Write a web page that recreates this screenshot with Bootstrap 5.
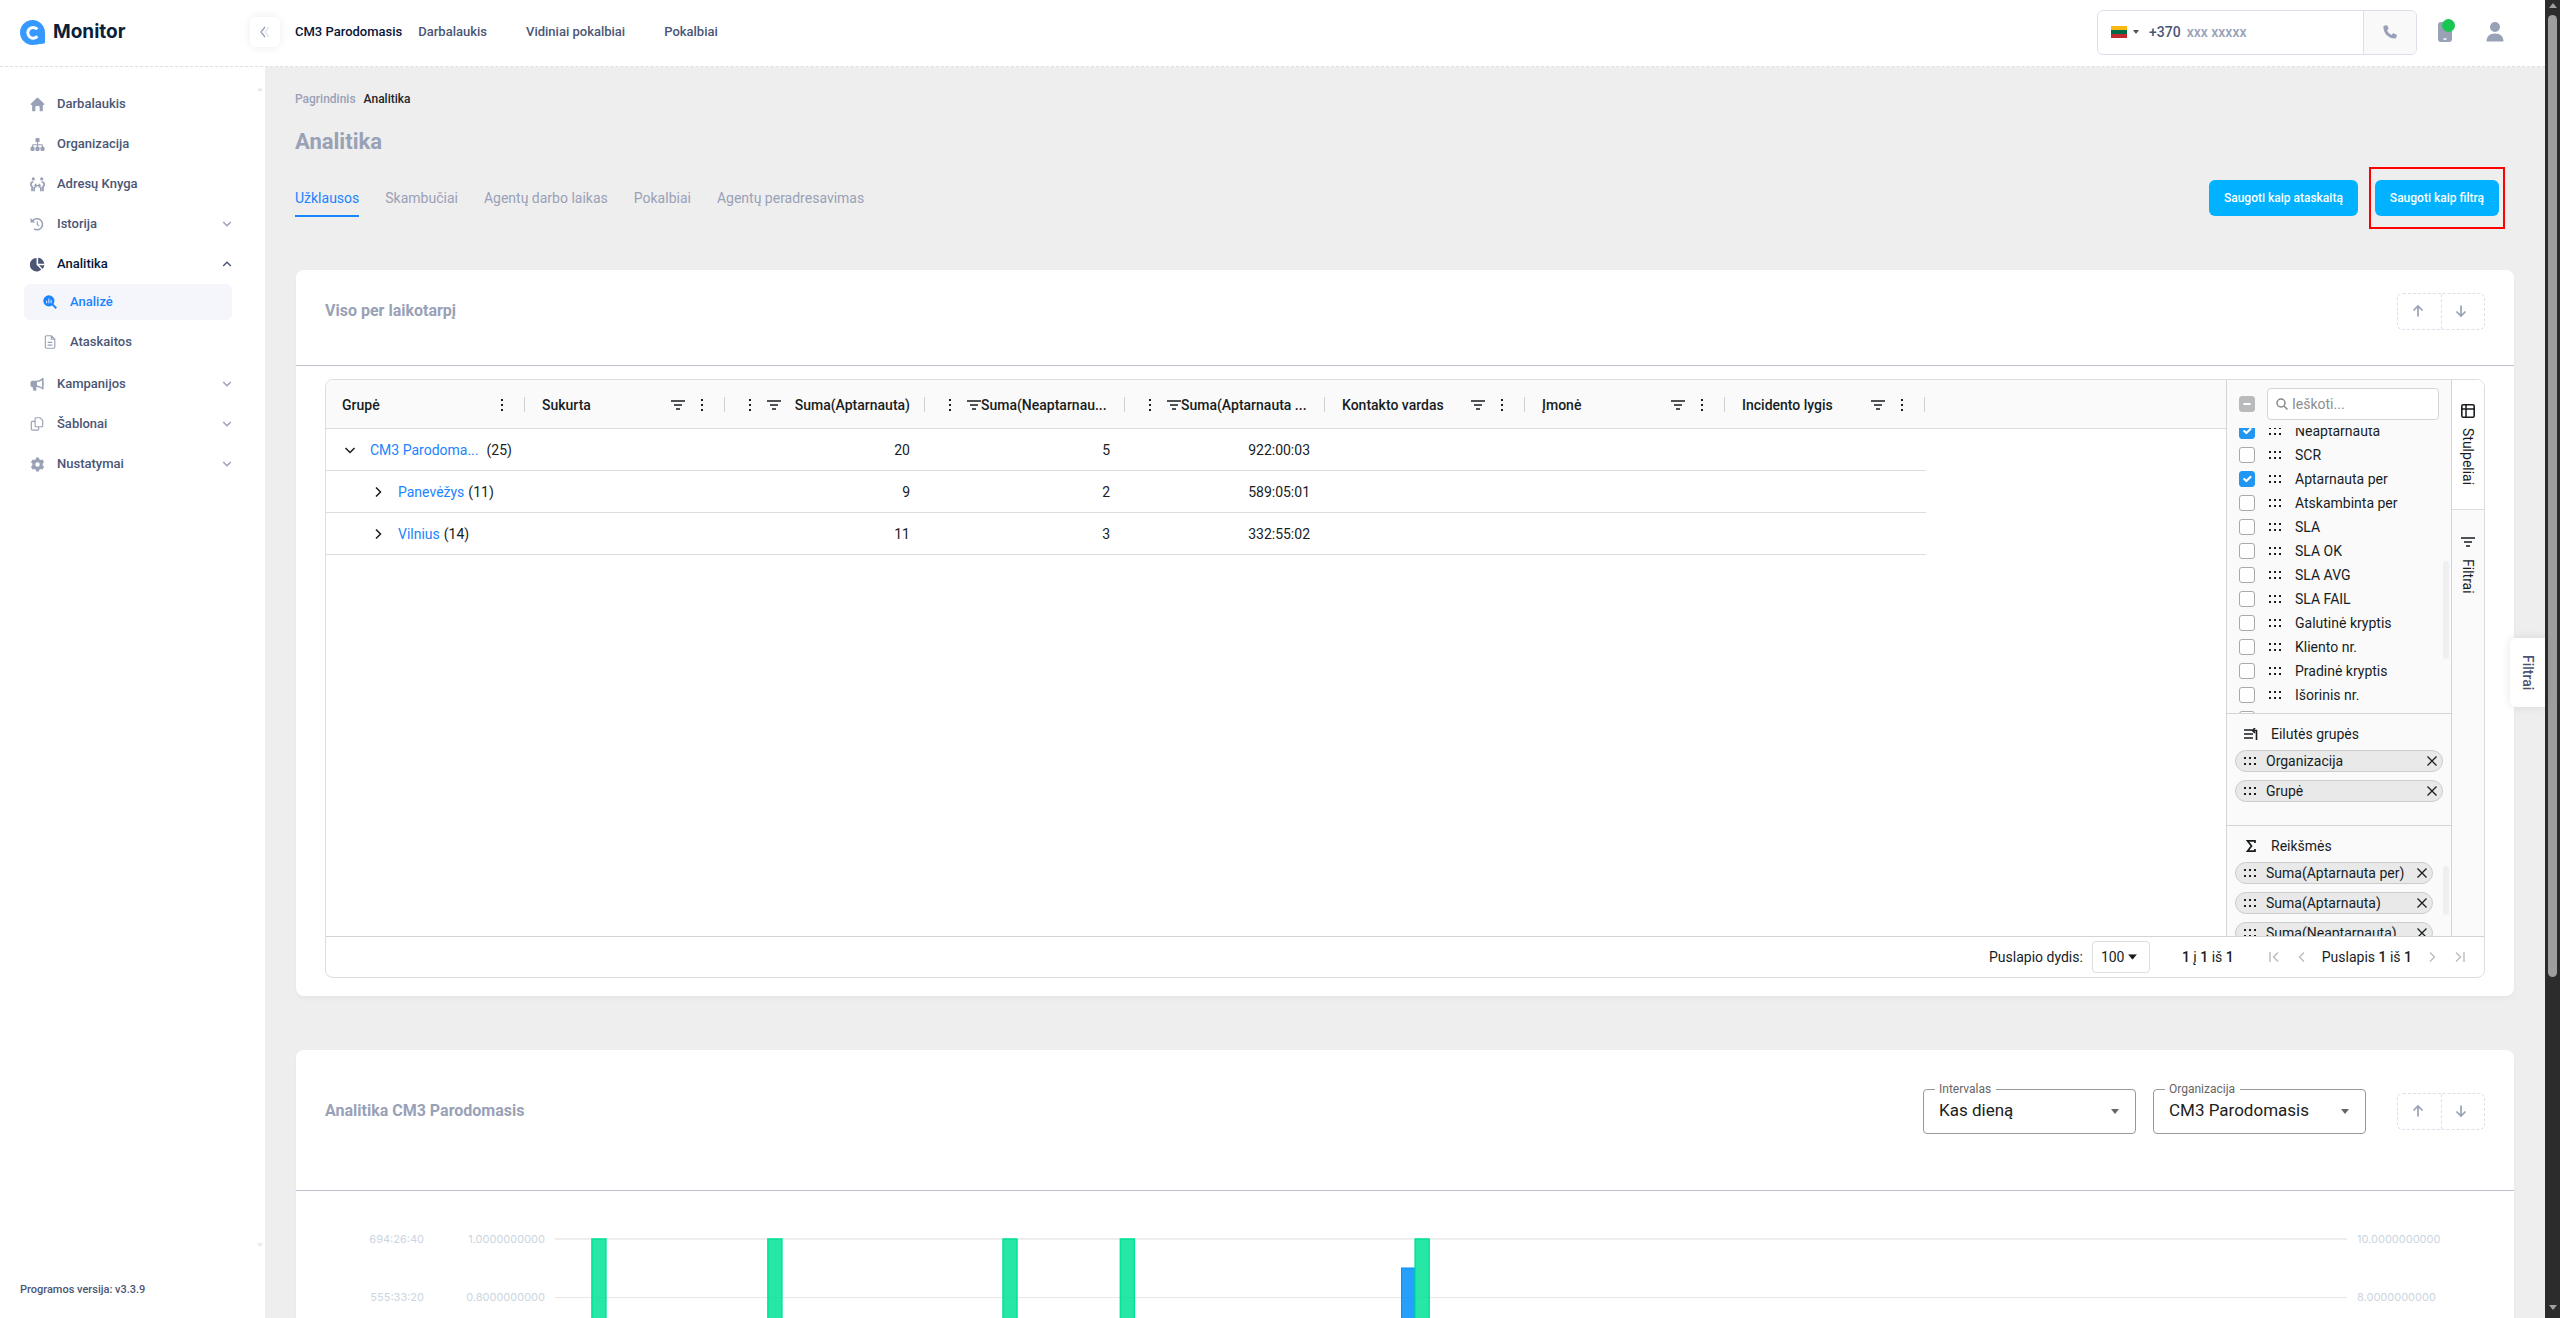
<!DOCTYPE html>
<html lang="lt">
<head>
<meta charset="utf-8">
<meta name="viewport" content="width=device-width, initial-scale=1">
<title>Monitor – Analitika</title>
<link href="https://cdn.jsdelivr.net/npm/bootstrap@5.3.0/dist/css/bootstrap.min.css" rel="stylesheet">
<style>
:root{--ink:#071437;--slate:#4b5675;--mute:#99a1b7;--blue:#1b84ff;--line:#dbdfe9;--edge:#dddddd;--text:#181d1f}
body{font-family:Roboto,"Noto Sans",sans-serif;font-size:14px;line-height:20px;color:var(--slate);background:#eee}
a{text-decoration:none;color:inherit}
svg{display:block;flex:none}
.icon-btn{border:0;background:none;padding:0;color:inherit;display:inline-flex;align-items:center;justify-content:center}
/* top bar */
.topbar{height:67px;border-bottom:1px dashed #dbdfe9;padding-bottom:2px}
.brand-zone{width:265px;padding-left:20px;gap:8px}
.brand-name{font:700 19px/24px Inter,sans-serif;color:#0b1f3a}
.side-toggle{width:30px;height:30px;border-radius:6px;background:#fff;box-shadow:0 0 10px rgba(0,0,0,.08);margin-left:-15px}
.topnav{font-size:13px;font-weight:500;padding-left:15px;gap:39px}
.topnav .me{color:var(--ink);margin-right:-23px}
.phone-box{width:320px;height:45px;border:1px solid #dbdfe9;border-radius:6px;overflow:hidden;margin-right:21px}
.phone-box input{border:0;width:120px;font-size:14px;font-weight:500;color:var(--slate);background:none;outline:0;padding:0}
.phone-box input::placeholder{color:var(--mute);opacity:1}
.flag-btn{gap:6px;padding-left:13px}
.dial{padding:0 6px 0 10px;font-weight:500}
.call-btn{width:53px;background:#f9f9f9;border-left:1px solid #dbdfe9;color:var(--mute)}
.online{width:13px;height:13px;background:#17c653;top:-3px;left:4px}
.account{margin:0 41px 0 34px}
/* side menu */
.sidebar{width:265px;background:#fff;padding:17px 0 20px;position:relative}
.menu{padding:0 33px 0 24px;font-size:13px;font-weight:500}
.menu a{height:40px;padding-left:5px;border-radius:6px}
.menu .ico{width:16px;margin-right:12px;display:flex;justify-content:center;color:var(--mute)}
.menu .chev{margin-left:auto;color:var(--mute)}
.menu .here{color:var(--ink)}
.menu .here .ico,.menu .here .chev{color:var(--slate)}
.menu .sub{height:36px;padding-left:18px;margin-bottom:4px}
.menu .sub.on{background:#f4f6fb;color:var(--blue)}
.menu .sub.on .ico{color:var(--blue)}
.scroll-tip{position:absolute;right:2px;color:#e8e9ee}
.version{font-size:11px;line-height:16px;font-weight:500;padding-left:20px}
/* page */
.page{padding:22px 31px 0 30px;min-width:0;overflow:hidden}
.crumbs{font-size:12px;font-weight:500;gap:8px}
.page-title{font-size:22px;line-height:28px;font-weight:700;color:var(--mute);margin:19px 0 0}
.tab-row{margin:11px 9px 41px 0}
.tabs{gap:26px;color:var(--mute);margin-top:21px}
.tabs a{padding-bottom:7px;border-bottom:2px solid transparent}
.tabs .on{color:var(--blue);border-color:var(--blue)}
.save{background:#00b2ff;color:#fff;border:0;border-radius:6px;height:36px;font-size:12px;font-weight:500;padding:0 15px}
.marked{border:2px solid #f00;padding:11px 4px;margin-left:11px}
.panel{display:flow-root;background:#fff;border-radius:8px;box-shadow:0 3px 4px rgba(0,0,0,.03);margin:0 0 54px 1px}
.panel-head{min-height:96px;padding:0 29px 13px;border-bottom:1px solid #bfc0cf}
.panel-head.tall{min-height:141px;padding-bottom:18px}
.panel-title{font-size:16px;line-height:24px;font-weight:700;color:var(--mute);margin:0}
.pair{border:1px dashed #dbdfe9;border-radius:6px;width:88px;height:37px;color:var(--mute)}
.pair button{width:43px;padding-right:4px}
.pair button+button{border-left:1px dashed #dbdfe9}
/* data grid */
.grid-box{border:1px solid var(--edge);border-radius:8px;margin:13px 29px 18px;color:var(--text);overflow:hidden}
.grid-body{height:556px}
.grid-main{min-width:0;overflow:hidden;background:linear-gradient(#fafafa 48px,var(--edge) 48px,var(--edge) 49px,#fff 49px)}
.data{table-layout:fixed;width:1600px;border-collapse:separate;border-spacing:0}
.data th,.data td{padding:0 16px;font-weight:400;white-space:nowrap}
.data th{height:49px;font-weight:500;position:relative}
.data th::after{content:"";position:absolute;right:1px;top:17px;width:1px;height:15px;background:#d0d0d0}
.data td{height:42px;border-bottom:1px solid var(--edge)}
.cell{display:flex;align-items:center}
.cell .end{margin:0 6px 0 auto;display:flex;gap:15px}
.cell .start{margin-left:6px;display:flex;gap:15px}
.cell .fold{margin-right:12px}
.cell.deep{padding-left:28px}
.data td a{color:var(--blue)}
.tools{width:225px;background:#fafafa;border-left:1px solid #d4d4d4}
.tool-top{height:48px;padding:0 12px;gap:12px}
.find{width:172px;height:32px;border:1px solid #d5d5d5;border-radius:4px;background:#fff;padding:0 8px;gap:4px;color:#888}
.find input{border:0;outline:0;min-width:0;width:100%;padding:0;background:none}
.find input::placeholder{color:#8c8e8f;opacity:1}
.tools .form-check-input{width:16px;height:16px;margin:0;border:1px solid #aaa;border-radius:3px;flex:none}
.tools .form-check-input:checked{background-color:#2196f3;border-color:#2196f3}
.tools .form-check-input:indeterminate{background-color:#b8babb;border-color:#b8babb}
.col-list{height:285px;overflow:hidden;position:relative}
.col-scroll{margin-top:-9px}
.col-item{height:24px;padding-left:12px}
.col-item .grab{margin:0 14px}
.thumb{width:6px;border-radius:3px;background:#efeff1;position:absolute;right:2px}
.thumb.long{top:133px;height:98px}
.thumb.short{top:40px;height:49px}
.zone{border-top:1px solid #d4d4d4;padding:8px 8px 0;overflow:hidden;position:relative;flex:none;height:112px}
.zone.scrolls{padding-right:18px;height:111px}
.zone-head{height:24px;gap:13px;padding-left:9px;margin-bottom:4px}
.pill{height:22px;border:1px solid #ccc;border-radius:11px;background:#e9e9e9;padding:0 5px 0 8px;margin-bottom:8px}
.pill .grab{margin-right:10px}
.rail{width:33px;background:#fafafa;border-left:1px solid #d4d4d4}
.rail button{writing-mode:vertical-rl;width:32px;gap:10px;height:100px}
.rail button.on{background:#fff;height:130px;border-bottom:1px solid var(--edge)}
.pager{height:41px;border-top:1px solid #d4d4d4;padding-right:10px}
.pager b{font-weight:500}
.size-pick{position:relative;margin:0 32px 0 9px}
.size-pick select{appearance:none;width:58px;height:32px;border:1px solid #ddd;border-radius:4px;background:#fff;color:inherit;padding:0 0 0 8px}
.size-pick svg{position:absolute;right:13px;top:13px;pointer-events:none}
.range{margin-right:26px}
.page-btn{width:28px;height:28px;color:#bbb}
.page-no{margin:0 6px}
/* chart panel */
.field{position:relative;width:213px;margin-right:17px}
.field+.field{margin-right:31px}
.field label{position:absolute;left:12px;top:-9px;padding:0 5px 0 4px;background:#fff;font-size:12px;line-height:18px;color:#666}
.field select{appearance:none;display:block;width:100%;height:45px;border:1px solid #999;border-radius:4px;background:#fff;padding:0 15px 2px;font-size:17px;color:#212121}
.field svg{position:absolute;right:16px;top:20px;color:#666;pointer-events:none}
.chart{font:400 11px/16px Inter,sans-serif;color:#cbd5e1;padding:40px 74px 0 29px}
.chart ul{list-style:none;margin:0;padding:0}
.chart li{height:58px}
.axis-a{width:99px;text-align:right}
.axis-b{width:121px;text-align:right}
.axis-c{width:83px}
.plot{margin:0 10px;padding-top:7px;min-width:0}
/* floating filter tab */
.float-tab{position:absolute;right:15px;top:638px;width:35px;height:69px;background:#fff;border-radius:6px 0 0 6px;box-shadow:0 0 10px rgba(0,0,0,.1);writing-mode:vertical-rl;font-weight:500;color:var(--slate)}
/* window scrollbar */
.win-bar{width:15px;background:#2c2c2c;padding:3px 3px 8px;flex:none;color:#a0a0a0}
.win-thumb{width:9px;height:962px;margin-top:7px;border-radius:5px;background:#9e9e9e}
</style>
</head>
<body class="vh-100 overflow-hidden position-relative">
<svg width="0" height="0" class="position-absolute" aria-hidden="true">
<defs>
<symbol id="home" viewBox="0 0 16 16"><path fill="currentColor" d="M8 .8c.4 0 .8.2 1.100.4l5.800 5.600c.7.700.3 1.700-.5 1.700h-.7V14c0 .8-.5 1.300-1.300 1.300H10.300V10.500a1 1 0 0 0-1-1H6.700a1 1 0 0 0-1 1v4.800H3.600c-.8 0-1.300-.5-1.300-1.300V8.500h-.7c-.8 0-1.200-1-.5-1.700l5.800-5.600C7.200 1 7.600.8 8 .8z"/></symbol>
<symbol id="org" viewBox="0 0 16 16"><g fill="currentColor"><rect x="5.800" y="1" width="4.400" height="4.400" rx="1"/><rect x=".5" y="10.500" width="4.400" height="4.400" rx="1.200"/><rect x="5.800" y="10.500" width="4.400" height="4.400" rx="1.200"/><rect x="11.100" y="10.500" width="4.400" height="4.400" rx="1.200"/></g><path d="M8 5v6M2.700 11V9.200c0-.6.3-.9.9-.9h8.800c.6 0 .9.3.9.9V11" fill="none" stroke="currentColor" stroke-width="1.200"/></symbol>
<symbol id="people" viewBox="0 0 16 16"><g fill="currentColor"><circle cx="3.500" cy="2" r="1.700"/><circle cx="12.500" cy="2" r="1.700"/></g><path d="M3.600 5.700C1.500 5 .7 6.600 1 9l1.200 1.200v5M12.400 5.700c2.100-.7 2.900.9 2.600 3.300l-1.200 1.200v5M4.400 15.200v-4.500M11.600 15.200v-4.500" fill="none" stroke="currentColor" stroke-width="1.900"/><path d="M5 9.200h6M6.800 7.200 5 9.200l1.800 2M9.200 7.200l1.800 2-1.800 2" fill="none" stroke="currentColor" stroke-width="1.300"/></symbol>
<symbol id="history" viewBox="0 0 16 16"><path d="M3 4.500A6.300 6.300 0 1 1 4.600 13.600" fill="none" stroke="currentColor" stroke-width="1.800"/><path d="M8.300 4.800v3.700l2 2" fill="none" stroke="currentColor" stroke-width="1.300"/><path d="M.6 1v5.400h5.400z" fill="currentColor"/></symbol>
<symbol id="pie" viewBox="0 0 16 16"><path fill="currentColor" d="M7 1v7.300l5 5.100A7.200 7.200 0 1 1 7 1z"/><path fill="currentColor" d="M8.700.8a7 7 0 0 1 6.500 6.500H8.700zM9.800 8.800h5.600a7 7 0 0 1-2 4z"/></symbol>
<symbol id="analyse" viewBox="0 0 16 16"><circle cx="6.700" cy="6.700" r="6.400" fill="currentColor"/><path d="M10.500 10.500l4.700 4.700" stroke="currentColor" stroke-width="2.200"/><path d="M4.100 6.700v2.700M6.700 4v5.400M9.300 5.700v3.700" stroke="#cfe3ff" stroke-width="1.300"/></symbol>
<symbol id="doc" viewBox="0 0 16 16"><path d="M4 .9h5.500l4 4V13.800c0 .8-.5 1.300-1.300 1.300H4c-.8 0-1.300-.5-1.300-1.300V2.200C2.700 1.400 3.200.9 4 .9zM9.500.9v4h4M5.300 8.500h5.400M5.300 11.500h5.400" fill="none" stroke="currentColor" stroke-width="1.300"/></symbol>
<symbol id="horn" viewBox="0 0 16 16"><path fill="currentColor" d="M14.500.8c.7 0 1 .4 1 1v5.100c.6.500.6 1.700 0 2.200v4.200c0 .9-.8 1.200-1.500.7-2-1.500-4-2.300-7-2.500l.4 2.800c.1.900-.3 1.300-1.100 1.300H4.700c-.7 0-1.100-.3-1.200-1L3 11.400C1.300 11.400.5 10.500.5 9V6.500C.5 5 1.500 4.200 2.800 4.200H7C10 4 12 3 13.700 1.300z"/><path fill="#fff" d="M8 5.600c2.200-.2 4.200-.9 5.700-2V12A12 12 0 0 0 8 9.800z"/></symbol>
<symbol id="copy" viewBox="0 0 16 16"><path d="M7 .9h4.500l3 3v6c0 .8-.4 1.200-1.200 1.200H7c-.8 0-1.200-.4-1.200-1.200V2.100C5.800 1.300 6.200.9 7 .9zM5.800 5H2.700c-.8 0-1.200.4-1.200 1.200v7.600c0 .8.4 1.200 1.200 1.200h6c.8 0 1.200-.4 1.200-1.200v-2.500" fill="none" stroke="currentColor" stroke-width="1.300"/></symbol>
<symbol id="gear" viewBox="0 0 16 16"><path fill="currentColor" fill-rule="evenodd" d="M6.600.5h2.800l.5 2 1.400.8 2-.6 1.700 2.800-1.500 1.500v2l1.500 1.500-1.700 2.800-2-.6-1.400.8-.5 2H6.600l-.5-2-1.400-.8-2 .6L1 10.500 2.500 9V7L1 5.500l1.700-2.800 2 .6 1.400-.8zM8 5.600a2.400 2.400 0 1 0 0 4.800 2.400 2.400 0 0 0 0-4.800z"/></symbol>
<symbol id="down" viewBox="0 0 10 10"><path d="M1.200 3l3.800 3.800L8.800 3" fill="none" stroke="currentColor" stroke-width="1.400"/></symbol>
<symbol id="up" viewBox="0 0 10 10"><path d="M1.200 7 5 3.200 8.800 7" fill="none" stroke="currentColor" stroke-width="1.400"/></symbol>
<symbol id="funnel" viewBox="0 0 14 14"><path d="M0 3h14M3 7h8M5 11h4" stroke="currentColor" stroke-width="1.600"/></symbol>
<symbol id="dots" viewBox="0 0 4 14"><path d="M1 1h2v2H1zM1 6h2v2H1zM1 11h2v2H1z" fill="currentColor"/></symbol>
<symbol id="grab" viewBox="0 0 12 8"><path d="M0 0h2v2H0zM5 0h2v2H5zM10 0h2v2h-2zM0 6h2v2H0zM5 6h2v2H5zM10 6h2v2h-2z" fill="currentColor"/></symbol>
<symbol id="open" viewBox="0 0 16 16"><path d="M3.500 6 8 10.500 12.500 6" fill="none" stroke="currentColor" stroke-width="1.500"/></symbol>
<symbol id="shut" viewBox="0 0 16 16"><path d="M6 3.500 10.500 8 6 12.500" fill="none" stroke="currentColor" stroke-width="1.500"/></symbol>
<symbol id="cross" viewBox="0 0 10 10"><path d="M.5.5l9 9M9.500.5l-9 9" stroke="currentColor" stroke-width="1.300"/></symbol>
<symbol id="arrow-up" viewBox="0 0 14 14"><path d="M7 12.500V2M2.500 6.500 7 2l4.500 4.500" fill="none" stroke="currentColor" stroke-width="1.700"/></symbol>
<symbol id="arrow-down" viewBox="0 0 14 14"><path d="M7 1.500V12M2.500 7.500 7 12l4.500-4.500" fill="none" stroke="currentColor" stroke-width="1.700"/></symbol>
<symbol id="tri-up" viewBox="0 0 8 5"><path d="M0 5h8L4 0z" fill="currentColor"/></symbol>
<symbol id="tri-down" viewBox="0 0 8 5"><path d="M0 0h8L4 5z" fill="currentColor"/></symbol>
</defs>
</svg>
<div class="d-flex h-100">
<div class="flex-grow-1 d-flex flex-column overflow-hidden">

<header class="topbar bg-white d-flex align-items-center flex-shrink-0">
  <div class="brand-zone d-flex align-items-center">
    <svg width="25" height="25" viewBox="0 0 25 25"><path fill="#3699ff" d="M12.500 0C19.400 0 25 5.600 25 12.500V22c0 1-.6 1.500-1.500 1.600-4 .4-6 1.400-11 1.400C5.600 25 0 19.400 0 12.500S5.600 0 12.500 0z"/><path d="M17.300 9.300a5.400 5.400 0 1 0 0 7" fill="none" stroke="#fff" stroke-width="3"/></svg>
    <span class="brand-name">Monitor</span>
  </div>
  <button class="icon-btn side-toggle" type="button" aria-label="Suskleisti"><svg width="12" height="12" viewBox="0 0 12 12"><path d="M6 1 2 6l4 5" fill="none" stroke="#99a1b7" stroke-width="1.300"/><path d="M10 1 6 6l4 5" fill="none" stroke="#e3e6ee" stroke-width="1.300"/></svg></button>
  <nav class="topnav d-flex">
    <a href="#" class="me">CM3 Parodomasis</a>
    <a href="#">Darbalaukis</a>
    <a href="#">Vidiniai pokalbiai</a>
    <a href="#">Pokalbiai</a>
  </nav>
  <div class="phone-box d-flex align-items-stretch ms-auto">
    <div class="d-flex align-items-center flex-grow-1">
      <button class="icon-btn flag-btn" type="button" aria-label="Šalis"><svg width="16" height="12"><path fill="#fdb913" d="M0 0h16v4H0z"/><path fill="#006a44" d="M0 4h16v4H0z"/><path fill="#c1272d" d="M0 8h16v4H0z"/></svg><svg width="6" height="4"><path fill="#555" d="M0 0h6L3 4z"/></svg></button>
      <label class="dial" for="tel">+370</label><input id="tel" type="tel" placeholder="xxx xxxxx">
    </div>
    <button class="icon-btn call-btn" type="button" aria-label="Skambinti"><svg width="14" height="14" viewBox="0 0 14 14"><path fill="currentColor" d="M1.200.8 3.500.2c.5 0 .8.200 1 .6l1 2.400c.1.400 0 .8-.3 1L4 5.400A9 9 0 0 0 8.600 10l1.200-1.400c.3-.3.700-.4 1-.2l2.500 1c.4.200.6.600.5 1l-.6 2.400c-.1.500-.5.800-1 .8C5.600 13.600.4 8.400.4 1.800c0-.500.300-.9.800-1z"/></svg></button>
  </div>
  <button class="icon-btn position-relative" type="button" aria-label="Telefonas"><svg width="14" height="20"><rect width="14" height="20" rx="3" fill="#99a1b7"/><path d="M5.500 17h3" stroke="#fff" stroke-width="1.500"/></svg><span class="online rounded-circle position-absolute"></span></button>
  <button class="icon-btn account" type="button" aria-label="Paskyra"><svg width="18" height="20"><circle cx="9" cy="5" r="5" fill="#99a1b7"/><path d="M.5 19.500c0-5 3-8 8.500-8s8.500 3 8.500 8z" fill="#99a1b7"/></svg></button>
</header>

<div class="d-flex flex-grow-1 overflow-hidden">
<aside class="sidebar d-flex flex-column flex-shrink-0">
  <svg class="scroll-tip" style="top:20px" width="6" height="4"><use href="#tri-up"/></svg>
  <nav class="menu d-flex flex-column">
    <a href="#" class="d-flex align-items-center"><span class="ico"><svg width="15" height="15"><use href="#home"/></svg></span>Darbalaukis</a>
    <a href="#" class="d-flex align-items-center"><span class="ico"><svg width="15" height="15"><use href="#org"/></svg></span>Organizacija</a>
    <a href="#" class="d-flex align-items-center"><span class="ico"><svg width="15" height="15"><use href="#people"/></svg></span>Adresų Knyga</a>
    <a href="#" class="d-flex align-items-center"><span class="ico"><svg width="14" height="14"><use href="#history"/></svg></span>Istorija<svg class="chev" width="10" height="10"><use href="#down"/></svg></a>
    <a href="#" class="d-flex align-items-center here"><span class="ico"><svg width="15" height="15"><use href="#pie"/></svg></span>Analitika<svg class="chev" width="10" height="10"><use href="#up"/></svg></a>
    <a href="#" class="d-flex align-items-center sub on"><span class="ico"><svg width="14" height="14"><use href="#analyse"/></svg></span>Analizė</a>
    <a href="#" class="d-flex align-items-center sub"><span class="ico"><svg width="14" height="14"><use href="#doc"/></svg></span>Ataskaitos</a>
    <a href="#" class="d-flex align-items-center"><span class="ico"><svg width="14" height="14"><use href="#horn"/></svg></span>Kampanijos<svg class="chev" width="10" height="10"><use href="#down"/></svg></a>
    <a href="#" class="d-flex align-items-center"><span class="ico"><svg width="14" height="14"><use href="#copy"/></svg></span>Šablonai<svg class="chev" width="10" height="10"><use href="#down"/></svg></a>
    <a href="#" class="d-flex align-items-center"><span class="ico"><svg width="15" height="15"><use href="#gear"/></svg></span>Nustatymai<svg class="chev" width="10" height="10"><use href="#down"/></svg></a>
  </nav>
  <svg class="scroll-tip" style="bottom:71px" width="6" height="4"><use href="#tri-down"/></svg>
  <div class="version mt-auto">Programos versija: v3.3.9</div>
</aside>

<main class="page flex-grow-1">
  <nav class="crumbs d-flex"><a href="#" style="color:var(--mute)">Pagrindinis</a><span class="text-dark">Analitika</span></nav>
  <h1 class="page-title">Analitika</h1>
  <div class="tab-row d-flex justify-content-between align-items-start">
    <nav class="tabs d-flex">
      <a href="#" class="on">Užklausos</a><a href="#">Skambučiai</a><a href="#">Agentų darbo laikas</a><a href="#">Pokalbiai</a><a href="#">Agentų peradresavimas</a>
    </nav>
    <div class="d-flex align-items-center">
      <button class="save" type="button">Saugoti kaip ataskaitą</button>
      <div class="marked"><button class="save d-block" type="button">Saugoti kaip filtrą</button></div>
    </div>
  </div>

  <section class="panel">
    <div class="panel-head d-flex align-items-center justify-content-between">
      <h2 class="panel-title">Viso per laikotarpį</h2>
      <div class="pair d-flex"><button class="icon-btn" type="button" aria-label="Aukštyn"><svg width="14" height="14"><use href="#arrow-up"/></svg></button><button class="icon-btn" type="button" aria-label="Žemyn"><svg width="14" height="14"><use href="#arrow-down"/></svg></button></div>
    </div>
    <div class="grid-box">
      <div class="grid-body d-flex">
        <div class="grid-main flex-grow-1">
          <table class="data">
            <thead><tr>
              <th><div class="cell">Grupė<span class="end"><svg width="4" height="14"><use href="#dots"/></svg></span></div></th>
              <th><div class="cell">Sukurta<span class="end"><svg width="14" height="14"><use href="#funnel"/></svg><svg width="4" height="14"><use href="#dots"/></svg></span></div></th>
              <th><div class="cell"><span class="start"><svg width="4" height="14"><use href="#dots"/></svg><svg width="14" height="14"><use href="#funnel"/></svg></span><span class="ms-auto">Suma(Aptarnauta)</span></div></th>
              <th><div class="cell"><span class="start"><svg width="4" height="14"><use href="#dots"/></svg><svg width="14" height="14"><use href="#funnel"/></svg></span>Suma(Neaptarnau...</div></th>
              <th><div class="cell"><span class="start"><svg width="4" height="14"><use href="#dots"/></svg><svg width="14" height="14"><use href="#funnel"/></svg></span>Suma(Aptarnauta ...</div></th>
              <th><div class="cell">Kontakto vardas<span class="end"><svg width="14" height="14"><use href="#funnel"/></svg><svg width="4" height="14"><use href="#dots"/></svg></span></div></th>
              <th><div class="cell">Įmonė<span class="end"><svg width="14" height="14"><use href="#funnel"/></svg><svg width="4" height="14"><use href="#dots"/></svg></span></div></th>
              <th><div class="cell">Incidento lygis<span class="end"><svg width="14" height="14"><use href="#funnel"/></svg><svg width="4" height="14"><use href="#dots"/></svg></span></div></th>
            </tr></thead>
            <tbody>
              <tr><td><div class="cell"><svg class="fold" width="16" height="16"><use href="#open"/></svg><a href="#">CM3 Parodoma...</a><span class="ms-2">(25)</span></div></td><td></td><td class="text-end">20</td><td class="text-end">5</td><td class="text-end">922:00:03</td><td></td><td></td><td></td></tr>
              <tr><td><div class="cell deep"><svg class="fold" width="16" height="16"><use href="#shut"/></svg><a href="#" class="me-1">Panevėžys</a>(11)</div></td><td></td><td class="text-end">9</td><td class="text-end">2</td><td class="text-end">589:05:01</td><td></td><td></td><td></td></tr>
              <tr><td><div class="cell deep"><svg class="fold" width="16" height="16"><use href="#shut"/></svg><a href="#" class="me-1">Vilnius</a>(14)</div></td><td></td><td class="text-end">11</td><td class="text-end">3</td><td class="text-end">332:55:02</td><td></td><td></td><td></td></tr>
            </tbody>
          </table>
        </div>
        <div class="tools d-flex flex-column flex-shrink-0">
          <div class="tool-top d-flex align-items-center">
            <input class="form-check-input" type="checkbox" id="all" aria-label="Visi stulpeliai">
            <div class="find d-flex align-items-center"><svg width="12" height="12" viewBox="0 0 12 12"><circle cx="5" cy="5" r="4" fill="none" stroke="currentColor" stroke-width="1.500"/><path d="M8 8l3.500 3.500" stroke="currentColor" stroke-width="1.500"/></svg><input type="text" aria-label="Ieškoti" placeholder="Ieškoti..."></div>
          </div>
          <div class="col-list">
            <div class="col-scroll">
              <div class="col-item d-flex align-items-center"><input class="form-check-input" type="checkbox" id="c1" checked><svg class="grab" width="12" height="8"><use href="#grab"/></svg><label for="c1">Neaptarnauta</label></div>
              <div class="col-item d-flex align-items-center"><input class="form-check-input" type="checkbox" id="c2"><svg class="grab" width="12" height="8"><use href="#grab"/></svg><label for="c2">SCR</label></div>
              <div class="col-item d-flex align-items-center"><input class="form-check-input" type="checkbox" id="c3" checked><svg class="grab" width="12" height="8"><use href="#grab"/></svg><label for="c3">Aptarnauta per</label></div>
              <div class="col-item d-flex align-items-center"><input class="form-check-input" type="checkbox" id="c4"><svg class="grab" width="12" height="8"><use href="#grab"/></svg><label for="c4">Atskambinta per</label></div>
              <div class="col-item d-flex align-items-center"><input class="form-check-input" type="checkbox" id="c5"><svg class="grab" width="12" height="8"><use href="#grab"/></svg><label for="c5">SLA</label></div>
              <div class="col-item d-flex align-items-center"><input class="form-check-input" type="checkbox" id="c6"><svg class="grab" width="12" height="8"><use href="#grab"/></svg><label for="c6">SLA OK</label></div>
              <div class="col-item d-flex align-items-center"><input class="form-check-input" type="checkbox" id="c7"><svg class="grab" width="12" height="8"><use href="#grab"/></svg><label for="c7">SLA AVG</label></div>
              <div class="col-item d-flex align-items-center"><input class="form-check-input" type="checkbox" id="c8"><svg class="grab" width="12" height="8"><use href="#grab"/></svg><label for="c8">SLA FAIL</label></div>
              <div class="col-item d-flex align-items-center"><input class="form-check-input" type="checkbox" id="c9"><svg class="grab" width="12" height="8"><use href="#grab"/></svg><label for="c9">Galutinė kryptis</label></div>
              <div class="col-item d-flex align-items-center"><input class="form-check-input" type="checkbox" id="c10"><svg class="grab" width="12" height="8"><use href="#grab"/></svg><label for="c10">Kliento nr.</label></div>
              <div class="col-item d-flex align-items-center"><input class="form-check-input" type="checkbox" id="c11"><svg class="grab" width="12" height="8"><use href="#grab"/></svg><label for="c11">Pradinė kryptis</label></div>
              <div class="col-item d-flex align-items-center"><input class="form-check-input" type="checkbox" id="c12"><svg class="grab" width="12" height="8"><use href="#grab"/></svg><label for="c12">Išorinis nr.</label></div>
              <div class="col-item d-flex align-items-center"><input class="form-check-input" type="checkbox" aria-label="Kitas stulpelis"></div>
            </div>
            <span class="thumb long"></span>
          </div>
          <div class="zone">
            <div class="zone-head d-flex align-items-center"><svg width="14" height="12" viewBox="0 0 14 12"><path d="M0 2h8M0 6h9M0 10h9M12.500 12V2.500H9M11 0 8.500 2.500 11 5" fill="none" stroke="currentColor" stroke-width="1.600"/></svg>Eilutės grupės</div>
            <div class="pill d-flex align-items-center"><svg class="grab" width="12" height="8"><use href="#grab"/></svg>Organizacija<button class="icon-btn ms-auto" type="button" aria-label="Pašalinti"><svg width="10" height="10"><use href="#cross"/></svg></button></div>
            <div class="pill d-flex align-items-center"><svg class="grab" width="12" height="8"><use href="#grab"/></svg>Grupė<button class="icon-btn ms-auto" type="button" aria-label="Pašalinti"><svg width="10" height="10"><use href="#cross"/></svg></button></div>
          </div>
          <div class="zone scrolls">
            <div class="zone-head d-flex align-items-center"><svg width="14" height="14" viewBox="0 0 14 14"><path d="M11 4V1.800H3.500L7.500 7l-4 5.200H11V10" fill="none" stroke="currentColor" stroke-width="1.700"/></svg>Reikšmės</div>
            <div class="pill d-flex align-items-center"><svg class="grab" width="12" height="8"><use href="#grab"/></svg>Suma(Aptarnauta per)<button class="icon-btn ms-auto" type="button" aria-label="Pašalinti"><svg width="10" height="10"><use href="#cross"/></svg></button></div>
            <div class="pill d-flex align-items-center"><svg class="grab" width="12" height="8"><use href="#grab"/></svg>Suma(Aptarnauta)<button class="icon-btn ms-auto" type="button" aria-label="Pašalinti"><svg width="10" height="10"><use href="#cross"/></svg></button></div>
            <div class="pill d-flex align-items-center"><svg class="grab" width="12" height="8"><use href="#grab"/></svg>Suma(Neaptarnauta)<button class="icon-btn ms-auto" type="button" aria-label="Pašalinti"><svg width="10" height="10"><use href="#cross"/></svg></button></div>
            <span class="thumb short"></span>
          </div>
        </div>
        <div class="rail flex-shrink-0">
          <button class="icon-btn on" type="button"><svg width="14" height="14" viewBox="0 0 14 14"><rect x=".8" y=".8" width="12.400" height="12.400" rx="1.500" fill="none" stroke="currentColor" stroke-width="1.600"/><path d="M1 5h12M5 1v12" stroke="currentColor" stroke-width="1.500"/></svg>Stulpeliai</button>
          <button class="icon-btn" type="button"><svg width="14" height="14"><use href="#funnel"/></svg>Filtrai</button>
        </div>
      </div>
      <div class="pager d-flex align-items-center justify-content-end">
        <label for="size">Puslapio dydis:</label>
        <div class="size-pick"><select id="size"><option>100</option></select><svg width="9" height="6" viewBox="0 0 8 5"><use href="#tri-down"/></svg></div>
        <span class="range"><b>1</b> į <b>1</b> iš <b>1</b></span>
        <button class="icon-btn page-btn" type="button" aria-label="Pirmas"><svg width="10" height="10" viewBox="0 0 10 10"><path d="M1 0v10M9 .5 4.500 5 9 9.500" fill="none" stroke="currentColor" stroke-width="1.400"/></svg></button>
        <button class="icon-btn page-btn" type="button" aria-label="Ankstesnis"><svg width="10" height="10" viewBox="0 0 10 10"><path d="M7 .5 2.500 5 7 9.500" fill="none" stroke="currentColor" stroke-width="1.400"/></svg></button>
        <span class="page-no">Puslapis <b>1</b> iš <b>1</b></span>
        <button class="icon-btn page-btn" type="button" aria-label="Kitas"><svg width="10" height="10" viewBox="0 0 10 10"><path d="M3 .5 7.500 5 3 9.500" fill="none" stroke="currentColor" stroke-width="1.400"/></svg></button>
        <button class="icon-btn page-btn" type="button" aria-label="Paskutinis"><svg width="10" height="10" viewBox="0 0 10 10"><path d="M9 0v10M1 .5 5.500 5 1 9.500" fill="none" stroke="currentColor" stroke-width="1.400"/></svg></button>
      </div>
    </div>
  </section>

  <section class="panel">
    <div class="panel-head tall d-flex align-items-center">
      <h2 class="panel-title me-auto">Analitika CM3 Parodomasis</h2>
      <div class="field"><select id="step"><option>Kas dieną</option></select><label for="step">Intervalas</label><svg width="10" height="5"><use href="#tri-down"/></svg></div>
      <div class="field"><select id="orgsel"><option>CM3 Parodomasis</option></select><label for="orgsel">Organizacija</label><svg width="10" height="5"><use href="#tri-down"/></svg></div>
      <div class="pair d-flex"><button class="icon-btn" type="button" aria-label="Aukštyn"><svg width="14" height="14"><use href="#arrow-up"/></svg></button><button class="icon-btn" type="button" aria-label="Žemyn"><svg width="14" height="14"><use href="#arrow-down"/></svg></button></div>
    </div>
    <div class="chart d-flex">
      <ul class="axis-a"><li>694:26:40</li><li>555:33:20</li></ul>
      <ul class="axis-b"><li>1.0000000000</li><li>0.8000000000</li></ul>
      <div class="plot flex-grow-1">
        <svg width="100%" height="110">
          <path d="M0 1h3000" stroke="#eee" stroke-width="2"/><path d="M0 59.500h3000" stroke="#e8e8e8"/>
          <g fill="#00e396" fill-opacity=".85"><rect x="2.060%" y="1" width="14" height="130"/><rect x="11.880%" y="1" width="14" height="130"/><rect x="25%" y="1" width="14" height="130"/><rect x="31.550%" y="1" width="14" height="130"/><rect x="48%" y="1" width="14" height="130"/></g>
          <g fill="none" stroke="#00e396" stroke-width="1.500"><rect x="2.060%" y="1" width="14" height="130"/><rect x="11.880%" y="1" width="14" height="130"/><rect x="25%" y="1" width="14" height="130"/><rect x="31.550%" y="1" width="14" height="130"/></g>
          <rect x="47.240%" y="30" width="13" height="100" fill="#008ffb" fill-opacity=".85" stroke="#008ffb"/>
          <rect x="48%" y="1" width="14" height="130" fill="none" stroke="#00e396" stroke-width="1.500"/>
        </svg>
      </div>
      <ul class="axis-c"><li>10.0000000000</li><li>8.0000000000</li></ul>
    </div>
  </section>
</main>
</div>
</div>
<div class="win-bar d-flex flex-column align-items-center"><svg width="8" height="5"><use href="#tri-up"/></svg><div class="win-thumb"></div><svg class="mt-auto" width="8" height="5"><use href="#tri-down"/></svg></div>
</div>
<button class="icon-btn float-tab" type="button">Filtrai</button>
<script src="https://cdn.jsdelivr.net/npm/bootstrap@5.3.0/dist/js/bootstrap.bundle.min.js"></script>
<script>document.getElementById('all').indeterminate = true;</script>
</body>
</html>
